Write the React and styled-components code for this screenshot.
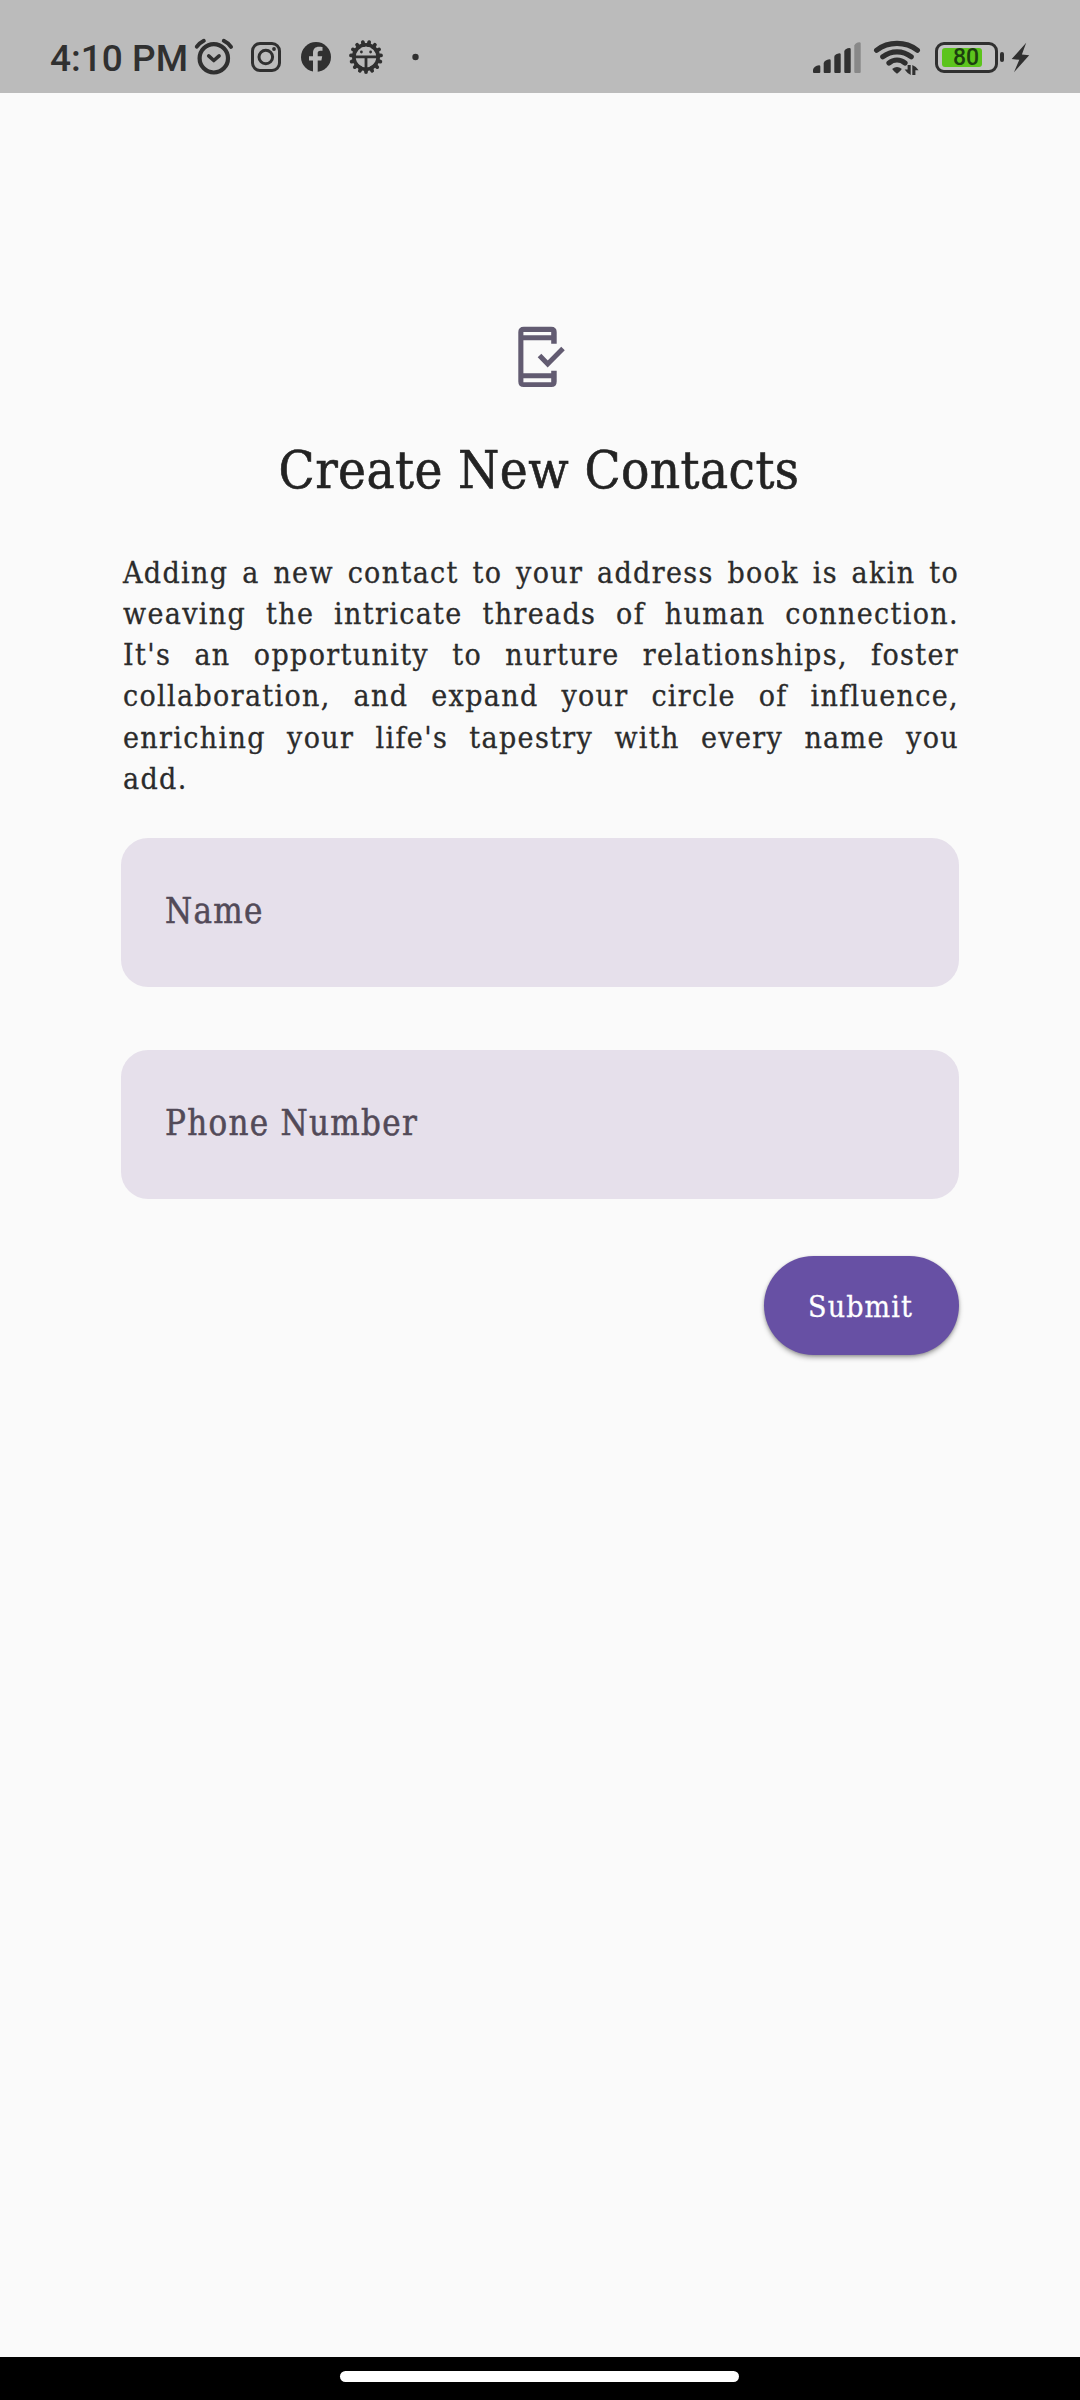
import React from "react";
import styled, { createGlobalStyle } from "styled-components";

const slab = `"DejaVu Serif Condensed", "DejaVu Serif", serif`;
const ink = "#303030";

const GlobalStyle = createGlobalStyle`
  *, *::before, *::after { box-sizing: border-box; }
  html, body { margin: 0; padding: 0; background: #fafafa; }
`;

const Screen = styled.div`
  width: 1080px;
  height: 2400px;
  display: flex;
  flex-direction: column;
  background: #fafafa;
  overflow: hidden;
  font-family: ${slab};
  font-stretch: condensed;
`;

const StatusBar = styled.header`
  height: 92.5px;
  flex: none;
  display: flex;
  justify-content: space-between;
  padding: 37px 50px 0 50px;
  background: #bbbbbb;
`;

const StatusGroup = styled.div`
  height: 40px;
  display: flex;
  align-items: flex-start;
`;

const Clock = styled.span`
  width: 144px;
  font: 500 37px/44px Roboto, sans-serif;
  color: ${ink};
  white-space: nowrap;
`;

const Glyph = styled.svg`
  display: block;
  flex: none;
  width: ${(p) => p.$w}px;
  height: 40px;
  margin-left: ${(p) => p.$gap || 0}px;
  overflow: visible;
`;

const Battery = styled.div`
  width: 63px;
  height: 31px;
  margin: 4.5px 0 0 15px;
  padding: 3px 4px;
  border: 3px solid ${ink};
  border-radius: 9px;
  background: #c4c4c4;
`;

const Charge = styled.div`
  width: 40px;
  height: 19px;
  border-radius: 3px;
  background: #5cc41c;
  padding-left: 11.5px;
  font: 500 23px/20.5px Roboto, sans-serif;
  color: #1d3f10;
`;

const BatteryTip = styled.div`
  width: 4px;
  height: 10px;
  margin: 15px 0 0 2px;
  border-radius: 2px;
  background: ${ink};
`;

const Form = styled.main`
  flex: 1;
  width: 838px;
  margin: 0 auto;
  padding-top: 233.5px;
  display: flex;
  flex-direction: column;
`;

const HeroIcon = styled.svg`
  display: block;
  width: 48px;
  height: 62px;
  margin-left: 397px;
`;

const Title = styled.h1`
  margin: 50px 0 0;
  padding-right: 2px;
  font-size: 52.5px;
  font-weight: 400;
  line-height: 64px;
  letter-spacing: 0.4px;
  text-align: center;
  color: #232323;
  -webkit-text-stroke: 0.6px #232323;
  white-space: nowrap;
`;

const Description = styled.p`
  margin: 50.2px 0 0;
  padding: 0 0 0 2px;
  font-size: 30px;
  line-height: 41.1px;
  letter-spacing: 1.35px;
  color: #2b2b2b;
  -webkit-text-stroke: 0.3px #2b2b2b;
`;

const Line = styled.span`
  display: block;
  white-space: nowrap;
  text-align: justify;
  text-align-last: ${(p) => (p.$last ? "left" : "justify")};
`;

const Field = styled.label`
  height: 149px;
  margin-top: ${(p) => p.$top}px;
  padding: 0 0 3px 44px;
  display: flex;
  align-items: center;
  border-radius: 27px;
  background: #e6e0eb;
  color: #524a58;
  font-size: 34.5px;
  letter-spacing: 1.3px;
  -webkit-text-stroke: 0.5px #524a58;
`;

const Submit = styled.button`
  align-self: flex-end;
  width: 195px;
  height: 99.5px;
  margin: 57px 0 0;
  padding: 3px 2px 0 0;
  border: 0;
  border-radius: 50px;
  background: #6750a4;
  box-shadow: 0 3px 5px rgba(0, 0, 0, 0.28), 0 1px 3px rgba(0, 0, 0, 0.2);
  color: #fff;
  font-family: inherit;
  font-stretch: condensed;
  font-size: 30px;
  letter-spacing: 1.1px;
  -webkit-text-stroke: 0.3px #fff;
`;

const NavBar = styled.footer`
  height: 43px;
  flex: none;
  padding: 14px 1px 0 0;
  background: #000;
`;

const NavHandle = styled.div`
  width: 399px;
  height: 11px;
  margin: 0 auto;
  border-radius: 6px;
  background: #fff;
`;

const lines = [
  "Adding a new contact to your address book is akin to",
  "weaving the intricate threads of human connection.",
  "It's an opportunity to nurture relationships, foster",
  "collaboration, and expand your circle of influence,",
  "enriching your life's tapestry with every name you",
  "add.",
];

const teeth = Array.from({ length: 15 }, (_, i) => i * 24 + 12);

const AlarmIcon = () => (
  <Glyph $w={40} viewBox="0 0 40 40" fill="none" stroke={ink} strokeLinecap="round" strokeLinejoin="round">
    <circle cx="19.8" cy="21.3" r="14.2" strokeWidth="4.2" />
    <path d="M2.8 9.6Q5.5 6 9.8 3.8M29.8 3.8Q34.3 6 37 9.8" strokeWidth="4" />
    <path d="M14.7 18.9l5.1 4.6 5.3-4.6" strokeWidth="3.6" />
  </Glyph>
);

const InstagramIcon = () => (
  <Glyph $w={30} $gap={17} viewBox="0 0 30 40" fill="none" stroke={ink} strokeWidth="3">
    <rect x="1.5" y="6.5" width="27" height="27" rx="7.5" />
    <circle cx="14.8" cy="20" r="6.8" />
    <circle cx="23" cy="12" r="1.9" fill={ink} stroke="none" />
  </Glyph>
);

const FacebookIcon = () => (
  <Glyph $w={30} $gap={20} viewBox="0 0 30 40">
    <circle cx="15" cy="20" r="15" fill={ink} />
    <path
      d="M12 35.5V23.5H8v-4.3h4v-3.4c0-4 2.3-6.1 5.9-6.1 1.5 0 2.9.2 3.6.4v3.6h-2.2c-2 0-2.6 1.1-2.6 2.4v3.1h4.5l-.8 4.3h-3.7v12z"
      fill="#bbbbbb"
    />
  </Glyph>
);

const GearIcon = () => (
  <Glyph $w={34} $gap={18} viewBox="0 0 34 40" fill="none" stroke={ink}>
    {teeth.map((a) => (
      <path key={a} d="M17 7.8V4.9" strokeWidth="3.8" strokeLinecap="round" transform={`rotate(${a} 17 20)`} />
    ))}
    <circle cx="17" cy="20" r="12.2" strokeWidth="3.6" />
    <path d="M4.5 19.8h25M17 20v12" strokeWidth="2.8" />
    <circle cx="12.4" cy="15" r="1.4" fill={ink} stroke="none" />
    <circle cx="21.6" cy="15" r="1.4" fill={ink} stroke="none" />
  </Glyph>
);

const MoreDot = () => (
  <Glyph $w={7} $gap={29} viewBox="0 0 7 40">
    <circle cx="3.5" cy="20" r="3.2" fill={ink} />
  </Glyph>
);

const SignalIcon = () => (
  <Glyph $w={48} viewBox="0 0 48 40" fill={ink}>
    <path d="M0 35V32.5Q1 29 6 28.3Q7.3 28.3 7.3 29.5V35Q7.3 36 6.3 36H1Q0 36 0 35z" />
    <path d="M10.7 35V26Q12 22.8 16.4 22.3Q17.7 22.3 17.7 23.5V35Q17.7 36 16.7 36H11.7Q10.7 36 10.7 35z" />
    <path d="M21.3 35V19.7Q22.5 16.8 26.4 16.3Q27.7 16.3 27.7 17.5V35Q27.7 36 26.7 36H22.3Q21.3 36 21.3 35z" />
    <path d="M31.3 35V14Q32.5 11.4 36.4 11Q37.7 11 37.7 12.2V35Q37.7 36 36.7 36H32.3Q31.3 36 31.3 35z" />
    <path d="M41.3 35V8.5Q42.5 5.7 46.4 5.3Q47.7 5.3 47.7 6.5V35Q47.7 36 46.7 36H42.3Q41.3 36 41.3 35z" fill="#888888" />
  </Glyph>
);

const WifiIcon = () => (
  <Glyph $w={46} $gap={13} viewBox="0 0 46 40" fill="none" stroke={ink} strokeWidth="5.2" strokeLinecap="round">
    <path d="M2.6 13.2Q11.5 6.4 23 6.4T43.4 13.2" />
    <path d="M8.8 19.8Q15 14.8 23 14.8T37.2 19.8" />
    <path d="M15 26Q18.5 23 23 23T31 26" />
    <path d="M18.4 31.8Q23 28 27.6 31.8Q28 33 23 36.8Q18 33 18.4 31.8z" fill={ink} stroke="none" />
    <path d="M36.7 28V38Q33 36.2 30.6 32.6H33.6V28zM38.3 38V28Q42.3 29.5 44.6 33.2H41.4V38z" fill={ink} stroke="none" />
  </Glyph>
);

const BoltIcon = () => (
  <Glyph $w={19} $gap={7.5} viewBox="0 0 19 40">
    <path d="M15.2 5.7L.7 22l7.6.8L3 35.3 18.2 18.3l-7.3-.8z" fill={ink} />
  </Glyph>
);

export default function App() {
  return (
    <>
      <GlobalStyle />
      <Screen>
        <StatusBar>
          <StatusGroup>
            <Clock>4:10 PM</Clock>
            <AlarmIcon />
            <InstagramIcon />
            <FacebookIcon />
            <GearIcon />
            <MoreDot />
          </StatusGroup>
          <StatusGroup>
            <SignalIcon />
            <WifiIcon />
            <Battery>
              <Charge>80</Charge>
            </Battery>
            <BatteryTip />
            <BoltIcon />
          </StatusGroup>
        </StatusBar>
        <Form>
          <HeroIcon viewBox="0 0 48 62" fill="#625b71">
            <path
              fillRule="evenodd"
              d="M5.8.7H33.2Q38.7.7 38.7 6.2V17.7H33.2V14.3H5.4V47.2H33.2V44.7H38.7V55.5Q38.7 61 33.2 61H5.8Q.3 61 .3 55.5V6.2Q.3.7 5.8.7ZM5.4 6V9.2H33.2V6ZM5.4 52.3V56.2H33.2V52.3Z"
            />
            <path d="M21.5 29.4L29.7 38 45 22.6" fill="none" stroke="#625b71" strokeWidth="5" />
          </HeroIcon>
          <Title>Create New Contacts</Title>
          <Description>
            {lines.map((text, i) => (
              <Line key={text} $last={i === lines.length - 1}>
                {text}
              </Line>
            ))}
          </Description>
          <Field $top={39.4}>Name</Field>
          <Field $top={62.5}>Phone Number</Field>
          <Submit type="button">Submit</Submit>
        </Form>
        <NavBar>
          <NavHandle />
        </NavBar>
      </Screen>
    </>
  );
}
